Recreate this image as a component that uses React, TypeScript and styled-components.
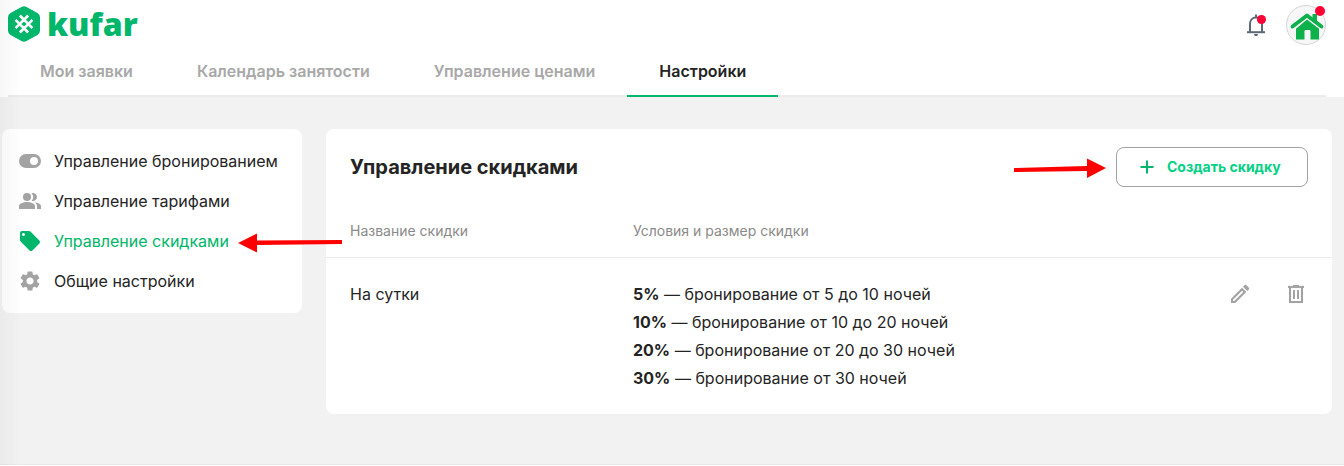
import React from "react";
import styled, { createGlobalStyle } from "styled-components";
import { MdLocalOffer, MdPeopleAlt, MdSettings } from "react-icons/md";

const GlobalStyle = createGlobalStyle`
  *, *::before, *::after { box-sizing: border-box; }
  body {
    margin: 0;
    background: #fff;
    color: #242424;
    font-family: Inter, "Noto Sans", sans-serif;
    font-size: 16px;
  }
`;

const Page = styled.div`
  position: relative;
`;

const EdgeShade = styled.div`
  position: absolute;
  inset: 0 auto 0 0;
  width: 22px;
  height: 100%;
  background: linear-gradient(to right, rgba(0, 0, 0, 0.03), rgba(0, 0, 0, 0));
  pointer-events: none;
`;

const Header = styled.header`
  background: #fff;
`;

const TopBar = styled.div`
  display: flex;
  align-items: center;
  justify-content: space-between;
  height: 50px;
  padding: 0 18px 0 8px;
`;

const Logo = styled.a`
  display: flex;
  align-items: center;
  gap: 6px;
  padding-bottom: 2px;
  color: #00b66a;
  font-family: "Open Sans", sans-serif;
  font-size: 32px;
  font-weight: 800;
  line-height: 40px;
  text-decoration: none;

  svg { display: block; }
`;

const HeaderActions = styled.div`
  display: flex;
  align-items: center;
  gap: 18px;
`;

const IconButton = styled.button`
  position: relative;
  display: block;
  padding: 0;
  border: 0;
  background: none;
  color: #a3a3a3;
  cursor: pointer;

  svg { display: block; }
`;

const Avatar = styled(IconButton)`
  width: 40px;
  height: 40px;
  border: 1px solid #d5d5d5;
  border-radius: 50%;
  background: #f7f7f7;
`;

const Dot = styled.span<{ $size: number; $top: number; $right: number }>`
  position: absolute;
  top: ${(p) => p.$top}px;
  right: ${(p) => p.$right}px;
  width: ${(p) => p.$size}px;
  height: ${(p) => p.$size}px;
  border-radius: 50%;
  background: #ff0036;
`;

const Tabs = styled.nav`
  display: flex;
  height: 47px;
  margin: 0 18px 0 8px;
  box-shadow: inset 0 -2px #ebebeb;
`;

const Tab = styled.a<{ $active?: boolean }>`
  padding: 9px 32px 0;
  border-bottom: 2px solid ${(p) => (p.$active ? "#00b66a" : "transparent")};
  color: ${(p) => (p.$active ? "#242424" : "#a8a8a8")};
  font-weight: 600;
  line-height: 24px;
  text-decoration: none;
  white-space: nowrap;
`;

const Main = styled.main`
  display: flex;
  align-items: flex-start;
  gap: 24px;
  padding: 32px 12px 50px 2px;
  border-bottom: 1px solid #e8e8e8;
  background: #f2f2f2;
`;

const SideMenu = styled.nav`
  flex: none;
  width: 300px;
  padding: 12px 16px;
  border-radius: 8px;
  background: #fff;
`;

const SideLink = styled.a<{ $active?: boolean }>`
  position: relative;
  display: flex;
  align-items: center;
  gap: 12px;
  height: 40px;
  color: ${(p) => (p.$active ? "#00b66a" : "#242424")};
  text-decoration: none;
  white-space: nowrap;

  svg { flex: none; color: ${(p) => (p.$active ? "#00b66a" : "#a3a3a3")}; }
`;

const Card = styled.section`
  flex: 1;
  min-width: 0;
  border-radius: 8px;
  background: #fff;
`;

const CardHead = styled.div`
  display: flex;
  align-items: center;
  justify-content: space-between;
  padding: 18px 24px;
`;

const Title = styled.h1`
  margin: 0;
  font-size: 20px;
  font-weight: 700;
  line-height: 28px;
`;

const CreateWrap = styled.div`
  position: relative;
`;

const CreateButton = styled.button`
  display: flex;
  align-items: center;
  gap: 8px;
  width: 192px;
  height: 40px;
  padding: 0 18px;
  border: 1px solid #a3a3a3;
  border-radius: 8px;
  background: #fff;
  color: #00d284;
  font: 700 14px/20px Inter, "Noto Sans", sans-serif;
  white-space: nowrap;
  cursor: pointer;

  svg { flex: none; }
`;

const SideArrow = styled.svg`
  position: absolute;
  top: 12px;
  left: 220px;
`;

const CreateArrow = styled.svg`
  position: absolute;
  top: 10px;
  right: 100%;
  margin-right: 10px;
`;

const Table = styled.table`
  width: 100%;
  border-collapse: collapse;
  table-layout: fixed;
`;

const NameCol = styled.col`
  width: 283px;
`;

const ActionCol = styled.col`
  width: 128px;
`;

const HeadCell = styled.th`
  height: 52px;
  padding: 0 0 0 24px;
  border-bottom: 1px solid #ebebeb;
  color: #8a8a8a;
  font-size: 14px;
  font-weight: 400;
  text-align: left;
`;

const Cell = styled.td`
  padding: 22px 0 22px 24px;
  line-height: 28px;
  vertical-align: top;
`;

const Terms = styled.ul`
  margin: 0;
  padding: 0;
  list-style: none;
`;

const RowActions = styled.div`
  display: flex;
  gap: 32px;
  padding: 2px 24px 0 0;
  justify-content: flex-end;
`;

const LogoMark = () => (
  <svg width="33" height="36" viewBox="0 0 33 36" aria-hidden="true">
    <path
      d="M13.500 1a5 5 0 0 1 5 0l11 6a5 5 0 0 1 2.500 4.300v13.400a5 5 0 0 1-2.500 4.300l-11 6a5 5 0 0 1-5 0l-11-6a5 5 0 0 1-2.500-4.300v-13.400a5 5 0 0 1 2.500-4.300z"
      fill="#00b66a"
    />
    <path
      d="M7.500 22.200L20.200 9.500M11.800 26.500L24.500 13.800M11.800 9.500L24.500 22.200M7.500 13.800L20.200 26.500"
      fill="none"
      stroke="#fff"
      strokeWidth="2.600"
    />
  </svg>
);

const BellIcon = () => (
  <svg width="24" height="24" viewBox="0 0 24 24" fill="none" aria-hidden="true">
    <path d="M3 19.200h18" stroke="#5b6876" strokeWidth="2" />
    <path d="M6 19v-8c0-3.800 2.400-6.500 6-6.500s6 2.700 6 6.500v8M12 1.500v3" stroke="#5b6876" strokeWidth="2" />
    <path d="M9.800 21h4.400l-1 2h-2.400z" fill="#5b6876" />
  </svg>
);

const HouseIcon = () => (
  <svg width="38" height="38" viewBox="0 0 38 38" aria-hidden="true">
    <path d="M25.500 8h4.500v9l-4.500-3z" fill="#0db14b" />
    <path d="M5.500 20.500l14.500-11 14.500 11" fill="none" stroke="#0db14b" strokeWidth="3.800" strokeLinecap="round" strokeLinejoin="round" />
    <path d="M20 13.500l12 9.200v10.800h-8.500v-8.500a1 1 0 0 0-1-1h-4a1 1 0 0 0-1 1v8.500h-8.500v-10.800z" fill="#0db14b" />
  </svg>
);

const ToggleIcon = () => (
  <svg width="24" height="24" viewBox="0 0 24 24" aria-hidden="true">
    <path fillRule="evenodd" fill="currentColor" d="M8 5h8a7 7 0 0 1 0 14h-8a7 7 0 0 1 0-14zM16 8a4 4 0 1 0 0 8a4 4 0 0 0 0-8z" />
  </svg>
);

const PencilIcon = () => (
  <svg width="24" height="24" viewBox="0 0 24 24" aria-hidden="true">
    <path fill="currentColor" fillRule="evenodd" d="M14 5.700l4.300 4.300-11 11h-4.300v-4.300zM14 8.700l-9 9v1.300h1.300l9-9z" />
    <path fill="currentColor" d="M15 4.700l1.600-1.600c.5-.4 1.200-.4 1.600 0l2.700 2.700c.4.500.4 1.100 0 1.600l-1.600 1.600z" />
  </svg>
);

const TrashIcon = () => (
  <svg width="24" height="24" viewBox="0 0 24 24" fill="none" stroke="currentColor" strokeWidth="2" aria-hidden="true">
    <path d="M4 5h16M9 4h6M6 5v15h12v-15M10 8v9M14 8v9" />
  </svg>
);

const PlusIcon = () => (
  <svg width="24" height="24" viewBox="0 0 24 24" fill="none" stroke="#00b66a" strokeWidth="2" aria-hidden="true">
    <path d="M12 5.500v13M5.500 12h13" />
  </svg>
);

const discounts = [
  ["5%", "бронирование от 5 до 10 ночей"],
  ["10%", "бронирование от 10 до 20 ночей"],
  ["20%", "бронирование от 20 до 30 ночей"],
  ["30%", "бронирование от 30 ночей"],
];

export default function App() {
  return (
    <Page>
      <GlobalStyle />
      <Header>
        <TopBar>
          <Logo href="#">
            <LogoMark />
            kufar
          </Logo>
          <HeaderActions>
            <IconButton type="button" aria-label="Уведомления">
              <BellIcon />
              <Dot $size={9} $top={2} $right={2} />
            </IconButton>
            <Avatar type="button" aria-label="Профиль">
              <HouseIcon />
              <Dot $size={10} $top={0} $right={0} />
            </Avatar>
          </HeaderActions>
        </TopBar>
        <Tabs>
          <Tab href="#">Мои заявки</Tab>
          <Tab href="#">Календарь занятости</Tab>
          <Tab href="#">Управление ценами</Tab>
          <Tab href="#" $active aria-current="page">Настройки</Tab>
        </Tabs>
      </Header>
      <Main>
        <SideMenu>
          <SideLink href="#"><ToggleIcon />Управление бронированием</SideLink>
          <SideLink href="#"><MdPeopleAlt size={24} />Управление тарифами</SideLink>
          <SideLink href="#" $active>
            <MdLocalOffer size={24} />
            Управление скидками
            <SideArrow width="104" height="20" viewBox="0 0 104 20" aria-hidden="true">
              <path d="M0 10L19 .5v7l85-.5v4l-85 1v7.500z" fill="#f00" />
            </SideArrow>
          </SideLink>
          <SideLink href="#"><MdSettings size={24} />Общие настройки</SideLink>
        </SideMenu>
        <Card>
          <CardHead>
            <Title>Управление скидками</Title>
            <CreateWrap>
              <CreateArrow width="92" height="22" viewBox="0 0 92 22" aria-hidden="true">
                <path d="M92 11L73 1.500v7.500l-73 2v4l73-1v7z" fill="#f00" />
              </CreateArrow>
              <CreateButton type="button"><PlusIcon />Создать скидку</CreateButton>
            </CreateWrap>
          </CardHead>
          <Table>
            <colgroup>
              <NameCol />
              <col />
              <ActionCol />
            </colgroup>
            <thead>
              <tr>
                <HeadCell scope="col">Название скидки</HeadCell>
                <HeadCell scope="col">Условия и размер скидки</HeadCell>
                <HeadCell as="td" />
              </tr>
            </thead>
            <tbody>
              <tr>
                <Cell>На сутки</Cell>
                <Cell>
                  <Terms>
                    {discounts.map(([rate, text]) => (
                      <li key={rate}><b>{rate}</b> — {text}</li>
                    ))}
                  </Terms>
                </Cell>
                <Cell>
                  <RowActions>
                    <IconButton type="button" aria-label="Редактировать"><PencilIcon /></IconButton>
                    <IconButton type="button" aria-label="Удалить"><TrashIcon /></IconButton>
                  </RowActions>
                </Cell>
              </tr>
            </tbody>
          </Table>
        </Card>
      </Main>
      <EdgeShade />
    </Page>
  );
}
